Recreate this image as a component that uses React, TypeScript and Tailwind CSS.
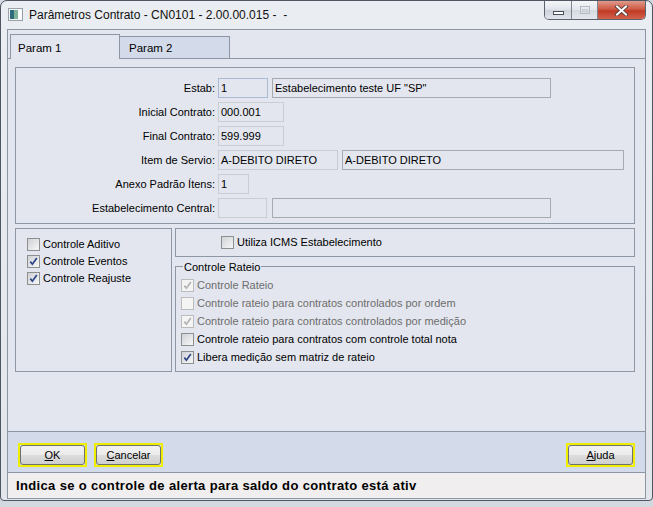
import React from "react";

function Cb({ checked = false, disabled = false }: { checked?: boolean; disabled?: boolean }) {
  return (
    <span
      className={
        disabled
          ? "w-[13px] h-[13px] border border-[#bcbcbc] bg-[#f4f4f4] flex items-center justify-center shrink-0"
          : "w-[13px] h-[13px] border border-[#8e8f8f] bg-[linear-gradient(135deg,#cfd2d7,#f7f7f7)] flex items-center justify-center shrink-0"
      }
    >
      {checked && (
        <svg width="9" height="9" viewBox="0 0 9 9">
          <path
            d="M1.3 4.6 L3.4 7.2 L7.8 0.9"
            stroke={disabled ? "#b3b3b3" : "#2d4485"}
            strokeWidth="1.7"
            fill="none"
          />
        </svg>
      )}
    </span>
  );
}

function Field({ w, value = "", tone = "light" }: { w: string; value?: string; tone?: "light" | "blue" | "dark" }) {
  const cls =
    tone === "blue"
      ? "h-[20px] border border-[#a9bcd6] bg-[#e3e6ee] px-[2px] flex items-center shrink-0"
      : tone === "dark"
      ? "h-[20px] border border-[#a6aab1] bg-[#e3e6ee] px-[2px] flex items-center shrink-0"
      : "h-[20px] border border-[#c9cdd4] bg-[#e3e6ee] px-[2px] flex items-center shrink-0";
  return (
    <div className={cls + " " + w}>
      <span className="whitespace-pre">{value}</span>
    </div>
  );
}

function Row({ label, children, first = false }: { label: string; children: React.ReactNode; first?: boolean }) {
  return (
    <div className={first ? "flex items-center h-[20px]" : "flex items-center h-[20px] mt-[4px]"}>
      <div className="w-[199px] text-right shrink-0">{label}</div>
      <div className="ml-[3px] flex items-center">{children}</div>
    </div>
  );
}

function Btn({ children }: { children: React.ReactNode }) {
  return (
    <div className="w-[69px] h-[24px] border-2 border-[#eeee00]">
      <div className="w-full h-full border border-[#707070] rounded-[3px] bg-[linear-gradient(#f2f2f2_0%,#ebebeb_50%,#dddddd_51%,#cfcfcf_100%)] flex items-center justify-center">
        {children}
      </div>
    </div>
  );
}

export default function App() {
  return (
    <div className="w-[653px] h-[507px] bg-[#d3d9e0] overflow-hidden font-['Liberation_Sans',Arial,sans-serif] text-[11px] text-black leading-none">
      <div className="w-[653px] h-[501px] border border-[#4f5661] rounded-t-[7px] rounded-b-[4px] bg-[linear-gradient(#eaedf1,#e2e6eb)] flex flex-col">
        {/* Title bar */}
        <div className="h-[28px] flex items-start shrink-0">
          <div className="ml-[7px] mt-[7px]">
            <svg width="15" height="13" viewBox="0 0 15 13">
              <rect x="0.5" y="0.5" width="14" height="12" fill="#f4f6f8" stroke="#9aa1aa" />
              <rect x="2" y="2" width="4" height="9" fill="#2f6d7c" />
              <rect x="6" y="2" width="4" height="9" fill="#7fb39a" />
              <rect x="10" y="2" width="3" height="9" fill="#ffffff" />
            </svg>
          </div>
          <div className="ml-[6px] mt-[8px] text-[12px] whitespace-pre text-[#101010]">
            Parâmetros Contrato - CN0101 - 2.00.00.015 -  -
          </div>
          <div className="flex-1" />
          <div className="mr-[6px] h-[19px] flex border border-t-0 border-[#5a626e] rounded-b-[5px] overflow-hidden">
            <div className="w-[27px] h-full bg-[linear-gradient(#f4f6f9,#dfe3e9_50%,#cdd3db_51%,#e0e4ea)] border-r border-[#7d8590] flex items-end justify-center pb-[4px]">
              <div className="w-[11px] h-[4px] bg-white border border-[#4a4f57]" />
            </div>
            <div className="w-[26px] h-full bg-[linear-gradient(#f4f6f9,#e3e7ec_50%,#d5dae1_51%,#e3e7ec)] border-r border-[#7d8590] flex items-center justify-center">
              <div className="w-[10px] h-[8px] border border-[#b5bac1] flex items-center justify-center">
                <div className="w-[6px] h-[3px] border border-[#c9cdd2]" />
              </div>
            </div>
            <div className="w-[47px] h-full bg-[linear-gradient(#e09a8c,#cf5a45_45%,#c03a25_55%,#d2624c)] flex items-center justify-center">
              <svg width="15" height="11" viewBox="0 0 15 11">
                <path d="M3 1.5 L12 9.5 M12 1.5 L3 9.5" stroke="#4a3a38" strokeWidth="3.6" strokeLinecap="square" />
                <path d="M3 1.5 L12 9.5 M12 1.5 L3 9.5" stroke="#ffffff" strokeWidth="2" strokeLinecap="square" />
              </svg>
            </div>
          </div>
        </div>

        {/* Client */}
        <div className="mx-[6px] mb-[1px] flex-1 border border-[#8b95a4] bg-[#e3e6ee] flex flex-col">
          {/* Tabs */}
          <div className="h-[29px] flex items-end shrink-0">
            <div className="w-[2px] h-full border-b border-[#8b95a4]" />
            <div className="w-[110px] h-[25px] border border-b-0 border-[#8b95a4] bg-[#e3e6ee] pl-[7px] pt-[8px] text-[11.5px]">
              Param 1
            </div>
            <div className="w-[110px] h-[23px] border border-l-0 border-[#8b95a4] bg-[#d3dbea] pl-[9px] pt-[6px] text-[11.5px]">
              Param 2
            </div>
            <div className="flex-1 h-full border-b border-[#8b95a4]" />
          </div>

          {/* Panel */}
          <div className="h-[372px] shrink-0 pt-[8px] pl-[7px] pr-[10px]">
            <div className="h-[157px] border border-[#8d97a6] pt-[10px]">
              <Row label="Estab:" first>
                <Field w="w-[50px]" value="1" tone="blue" />
                <div className="ml-[4px]">
                  <Field w="w-[279px]" value={'Estabelecimento teste UF "SP"'} tone="dark" />
                </div>
              </Row>
              <Row label="Inicial Contrato:">
                <Field w="w-[66px]" value="000.001" />
              </Row>
              <Row label="Final Contrato:">
                <Field w="w-[66px]" value="599.999" />
              </Row>
              <Row label="Item de Servio:">
                <Field w="w-[120px]" value="A-DEBITO DIRETO" />
                <div className="ml-[4px]">
                  <Field w="w-[282px]" value="A-DEBITO DIRETO" tone="dark" />
                </div>
              </Row>
              <Row label="Anexo Padrão Ítens:">
                <Field w="w-[31px]" value="1" />
              </Row>
              <Row label="Estabelecimento Central:">
                <Field w="w-[49px]" />
                <div className="ml-[5px]">
                  <Field w="w-[279px]" tone="dark" />
                </div>
              </Row>
            </div>

            <div className="mt-[4px] flex">
              <div className="w-[157px] h-[144px] border border-[#8d97a6] pt-[7px] pl-[11px]">
                <div className="h-[17px] flex items-center">
                  <Cb />
                  <span className="ml-[3px]">Controle Aditivo</span>
                </div>
                <div className="h-[17px] flex items-center">
                  <Cb checked />
                  <span className="ml-[3px]">Controle Eventos</span>
                </div>
                <div className="h-[17px] flex items-center">
                  <Cb checked />
                  <span className="ml-[3px]">Controle Reajuste</span>
                </div>
              </div>

              <div className="ml-[3px] w-[460px] flex flex-col">
                <div className="h-[29px] border border-[#8d97a6] flex items-center pl-[45px]">
                  <Cb />
                  <span className="ml-[3px]">Utiliza ICMS Estabelecimento</span>
                </div>
                <div className="mt-[9px] h-[106px] border border-[#8d97a6] relative pt-[10px] pl-[5px]">
                  <span className="absolute -top-[6px] left-[7px] px-[1px] bg-[#e3e6ee] leading-[13px]">
                    Controle Rateio
                  </span>
                  <div className="h-[17px] flex items-center text-[#6d6d6d]">
                    <Cb checked disabled />
                    <span className="ml-[3px]">Controle Rateio</span>
                  </div>
                  <div className="h-[18px] flex items-center text-[#6d6d6d]">
                    <Cb disabled />
                    <span className="ml-[3px]">Controle rateio para contratos controlados por ordem</span>
                  </div>
                  <div className="h-[18px] flex items-center text-[#6d6d6d]">
                    <Cb checked disabled />
                    <span className="ml-[3px]">Controle rateio para contratos controlados por medição</span>
                  </div>
                  <div className="h-[18px] flex items-center">
                    <Cb />
                    <span className="ml-[3px]">Controle rateio para contratos com controle total nota</span>
                  </div>
                  <div className="h-[18px] flex items-center">
                    <Cb checked />
                    <span className="ml-[3px]">Libera medição sem matriz de rateio</span>
                  </div>
                </div>
              </div>
            </div>
          </div>

          {/* Button bar */}
          <div className="h-[42px] shrink-0 border-y border-[#8b95a4] bg-[#d3dbea] flex items-start pt-[11px] px-[10px]">
            <Btn>
              <span>
                <span className="underline">O</span>K
              </span>
            </Btn>
            <div className="ml-[7px]">
              <Btn>
                <span>
                  <span className="underline">C</span>ancelar
                </span>
              </Btn>
            </div>
            <div className="flex-1" />
            <Btn>
              <span>
                <span className="underline">A</span>juda
              </span>
            </Btn>
          </div>

          {/* Status bar */}
          <div className="flex-1 bg-[#f0eeee] flex items-center pl-[8px] font-bold text-[13px] tracking-[0.35px] whitespace-pre">
            Indica se o controle de alerta para saldo do contrato está ativ
          </div>
        </div>
      </div>
    </div>
  );
}
